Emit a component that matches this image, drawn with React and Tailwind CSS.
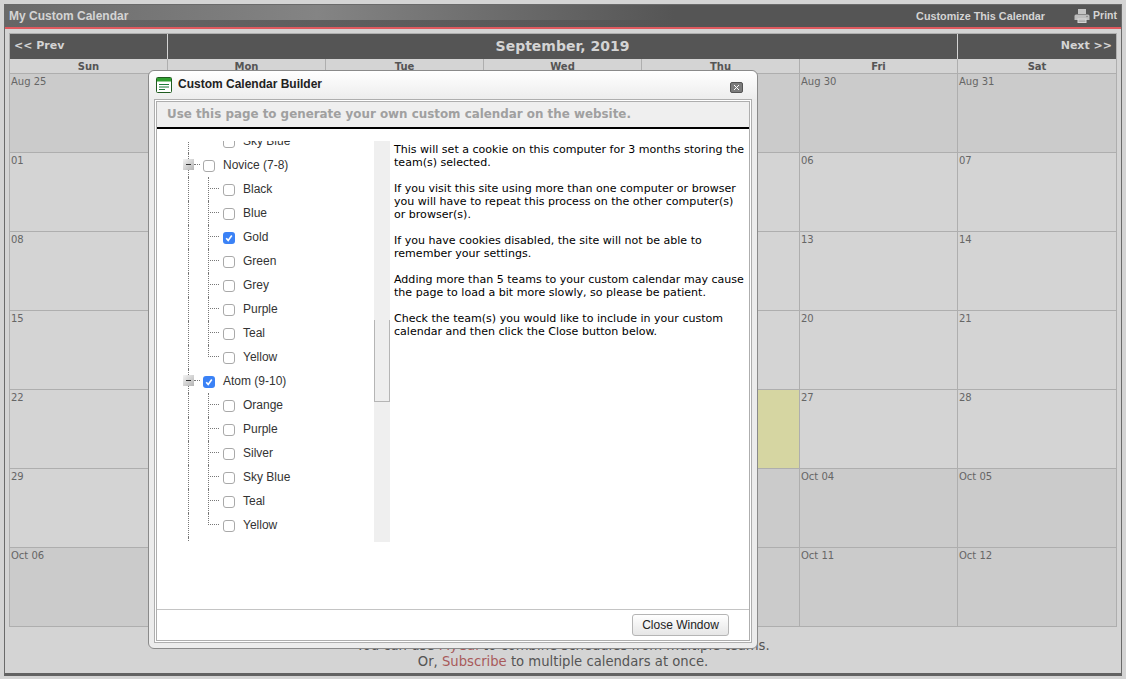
const headDays = ['Sun', 'Mon', 'Tue', 'Wed', 'Thu', 'Fri', 'Sat'];

const weeks = [
  [['Aug 25', 1], ['Aug 26', 1], ['Aug 27', 1], ['Aug 28', 1], ['Aug 29', 1], ['Aug 30', 1], ['Aug 31', 1]],
  [['01'], ['02'], ['03'], ['04'], ['05'], ['06'], ['07']],
  [['08'], ['09'], ['10'], ['11'], ['12'], ['13'], ['14']],
  [['15'], ['16'], ['17'], ['18'], ['19'], ['20'], ['21']],
  [['22'], ['23'], ['24'], ['25'], ['26', 0, 1], ['27'], ['28']],
  [['29'], ['30'], ['Oct 01', 1], ['Oct 02', 1], ['Oct 03', 1], ['Oct 04', 1], ['Oct 05', 1]],
  [['Oct 06', 1], ['Oct 07', 1], ['Oct 08', 1], ['Oct 09', 1], ['Oct 10', 1], ['Oct 11', 1], ['Oct 12', 1]],
];

const novice = [['Black'], ['Blue'], ['Gold', true], ['Green'], ['Grey'], ['Purple'], ['Teal'], ['Yellow']];
const atom = [['Orange'], ['Purple'], ['Silver'], ['Sky Blue'], ['Teal'], ['Yellow']];

function Check({ checked }) {
  if (checked) {
    return (
      <span className="mt-[1px] flex h-[12px] w-[12px] shrink-0 items-center justify-center rounded-[3px] bg-[#3b82f6]">
        <svg width="10" height="10" viewBox="0 0 10 10" fill="none">
          <path d="M2.2 5.2 L4.2 7.4 L7.8 2.6" stroke="#fff" strokeWidth="1.6" />
        </svg>
      </span>
    );
  }
  return <span className="mt-[1px] h-[12px] w-[12px] shrink-0 rounded-[3px] border border-[#a9a9a9] bg-white" />;
}

function Leaf({ label, checked, last }) {
  return (
    <div className="relative flex h-[24px] items-center pl-[66px]">
      <span className="absolute left-[31px] top-0 h-[24px] border-l border-dotted border-[#777]" />
      <span className={`absolute left-[51px] top-0 border-l border-dotted border-[#777] ${last ? 'h-[12px]' : 'h-[24px]'}`} />
      <span className="absolute left-[51px] top-[11px] w-[11px] border-t border-dotted border-[#777]" />
      <Check checked={checked} />
      <span className="ml-[8px] text-[12px] text-[#333]">{label}</span>
    </div>
  );
}

function Group({ label, checked }) {
  return (
    <div className="relative flex h-[24px] items-center pl-[46px]">
      <span className="absolute left-[31px] top-0 h-[24px] border-l border-dotted border-[#777]" />
      <span className="absolute left-[37px] top-[11px] w-[6px] border-t border-dotted border-[#777]" />
      <span className="absolute left-[26px] top-[6px] flex h-[11px] w-[11px] items-center justify-center bg-gradient-to-br from-[#f4f4f4] to-[#b4b4b4]">
        <span className="h-px w-[5px] bg-[#333]" />
      </span>
      <Check checked={checked} />
      <span className="ml-[8px] text-[12px] text-[#333]">{label}</span>
    </div>
  );
}

function Modal() {
  return (
    <div className="absolute left-[148px] top-[70px] h-[579px] w-[610px] rounded-[6px] border border-[#8a8a8a] bg-[#ececec] font-['Liberation_Sans',Arial,sans-serif]">
      <div className="flex h-[28px] items-start rounded-t-[6px] bg-gradient-to-b from-white to-[#ededed] pl-[7px] pr-[14px]">
        <svg className="mt-[6px]" width="16" height="16" viewBox="0 0 16 16">
          <rect x="0.5" y="0.5" width="15" height="15" rx="1" fill="#fff" stroke="#1f5c1f" />
          <rect x="1" y="1" width="14" height="3.5" fill="#2f9e2f" />
          <path d="M3 7.5h10M3 10h10M3 12.5h6" stroke="#1d7a3a" strokeWidth="1" />
        </svg>
        <span className="ml-[6px] mt-[6px] text-[12px] leading-[14px] font-bold text-[#222]">Custom Calendar Builder</span>
        <span className="ml-auto mt-[11px] flex h-[11px] w-[13px] items-center justify-center rounded-[2px] border border-[#555] bg-[#7c7c7c]">
          <svg width="7" height="7" viewBox="0 0 7 7">
            <path d="M1 1l5 5M6 1l-5 5" stroke="#fff" strokeWidth="1" />
          </svg>
        </span>
      </div>
      <div className="mx-[5px] h-[544px] border border-[#aeaeae] bg-white p-px">
        <div className="h-full border border-[#aeaeae]">
          <div className="flex h-[27px] items-center border-b-2 border-black bg-[#efefef] pl-[10px] pt-[1px] font-['DejaVu_Sans',sans-serif] text-[11.9px] font-bold text-[#a0a0a0]">
            Use this page to generate your own custom calendar on the website.
          </div>
          <div className="flex h-[480px]">
            <div className="relative mt-[12px] h-[401px] w-[217px] overflow-hidden">
              <div className="-mt-[12px]">
                <div className="relative flex h-[24px] items-center pl-[66px]">
                  <span className="absolute left-[31px] top-0 h-[24px] border-l border-dotted border-[#777]" />
                  <Check />
                  <span className="ml-[8px] text-[12px] text-[#333]">Sky Blue</span>
                </div>
                <Group label="Novice (7-8)" />
                {novice.map(([label, checked], i) => (
                  <Leaf key={label} label={label} checked={checked} last={i === novice.length - 1} />
                ))}
                <Group label="Atom (9-10)" checked />
                {atom.map(([label], i) => (
                  <Leaf key={label} label={label} last={i === atom.length - 1} />
                ))}
                <div className="relative h-[4px]">
                  <span className="absolute left-[31px] top-0 h-[4px] border-l border-dotted border-[#777]" />
                </div>
              </div>
            </div>
            <div className="mt-[12px] flex h-[401px] w-[16px] flex-col bg-[#efefef]">
              <div className="mt-[179px] h-[82px] border-x border-b border-[#b5b5b5] bg-[#eeeeee]" />
            </div>
            <div className="mt-[14px] w-[356px] pl-[4px] font-['DejaVu_Sans',sans-serif] text-[11.05px] leading-[13px] text-black">
              <p>This will set a cookie on this computer for 3 months storing the team(s) selected.</p>
              <p className="mt-[13px]">If you visit this site using more than one computer or browser you will have to repeat this process on the other computer(s) or browser(s).</p>
              <p className="mt-[13px]">If you have cookies disabled, the site will not be able to remember your settings.</p>
              <p className="mt-[13px]">Adding more than 5 teams to your custom calendar may cause the page to load a bit more slowly, so please be patient.</p>
              <p className="mt-[13px]">Check the team(s) you would like to include in your custom calendar and then click the Close button below.</p>
            </div>
          </div>
          <div className="flex justify-end border-t border-[#c4c4c4] pr-[20px] pt-[4px]">
            <button className="h-[22px] w-[97px] rounded-[3px] border border-[#b5b5b5] bg-gradient-to-b from-white to-[#e6e6e6] text-[12px] text-[#222]">
              Close Window
            </button>
          </div>
        </div>
      </div>
    </div>
  );
}

export default function App() {
  return (
    <div className="relative h-[679px] w-[1126px] overflow-hidden bg-[#d4d4d4] p-[4px] font-['DejaVu_Sans',sans-serif]">
      <div className="h-[672px] border-x border-t border-[#6a6a6a] border-b-[3px] border-b-[#616161]">
        <div className="flex h-[24px] items-center justify-between border-b-2 border-[#e05a5f] pl-[4px] pr-[4px] font-['Liberation_Sans',Arial,sans-serif] font-bold text-[#d4d4d4] [background:linear-gradient(90deg,#6a6a6a,#848484_28%,#555_60%)_top/100%_15px_no-repeat,linear-gradient(90deg,#666,#555_60%)]">
          <span className="text-[12px]">My Custom Calendar</span>
          <div className="flex items-center">
            <span className="text-[10.8px]">Customize This Calendar</span>
            <svg className="ml-[29px] mr-[3px]" width="16" height="16" viewBox="0 0 16 16">
              <path d="M4 1h8v5H4z" fill="#c4c4c4" />
              <path d="M2 6.5h12a1.5 1.5 0 0 1 1.5 1.5v4h-15V8A1.5 1.5 0 0 1 2 6.5z" fill="#bdbdbd" />
              <path d="M3.5 10.5h9V15h-9z" fill="#d8d8d8" />
              <path d="M4.5 12.2h7M4.5 13.6h7" stroke="#9a9a9a" strokeWidth="0.8" />
              <circle cx="13" cy="8.5" r="0.7" fill="#777" />
            </svg>
            <span className="text-[10.5px]">Print</span>
          </div>
        </div>
        <div className="mx-[4px] mt-[4px] border border-[#aeaeae]">
          <div className="grid h-[25px] grid-cols-[158px_790px_1fr] items-stretch bg-[#555] font-bold text-[#d4d4d4]">
            <div className="flex items-center border-r border-[#d4d4d4] pl-[4px] text-[11px]">&lt;&lt; Prev</div>
            <div className="flex items-center justify-center border-r border-[#d4d4d4] text-[14px]">September, 2019</div>
            <div className="flex items-center justify-end pr-[4px] text-[11px]">Next &gt;&gt;</div>
          </div>
          <div className="grid h-[15px] grid-cols-[158px_158px_158px_158px_158px_158px_1fr] border-b border-[#aeaeae] bg-[#d4d4d4]">
            {headDays.map((d) => (
              <div key={d} className="flex items-center justify-center border-r border-[#aeaeae] pt-[1px] text-[10px] font-bold leading-none text-[#555] last:border-r-0">
                {d}
              </div>
            ))}
          </div>
          {weeks.map((week, i) => (
            <div key={i} className="grid h-[79px] grid-cols-[158px_158px_158px_158px_158px_158px_1fr] border-b border-[#aeaeae] last:h-[78px] last:border-b-0">
              {week.map(([label, other, today]) => (
                <div
                  key={label}
                  className={`border-r border-[#aeaeae] pl-[1px] pt-[1px] text-[10px] leading-[13px] text-[#666] last:border-r-0 ${today ? 'bg-[#d6d6a2]' : other ? 'bg-[#cbcbcb]' : 'bg-[#d4d4d4]'}`}
                >
                  {label}
                </div>
              ))}
            </div>
          ))}
        </div>
        <div className="mt-[11px] text-center text-[13.2px] leading-[16px] text-[#555]">
          <p>You can use <span className="text-[#a85a5a]">MyCal</span> to combine schedules from multiple teams.</p>
          <p>Or, <span className="text-[#a85a5a]">Subscribe</span> to multiple calendars at once.</p>
        </div>
      </div>
      <Modal />
    </div>
  );
}
